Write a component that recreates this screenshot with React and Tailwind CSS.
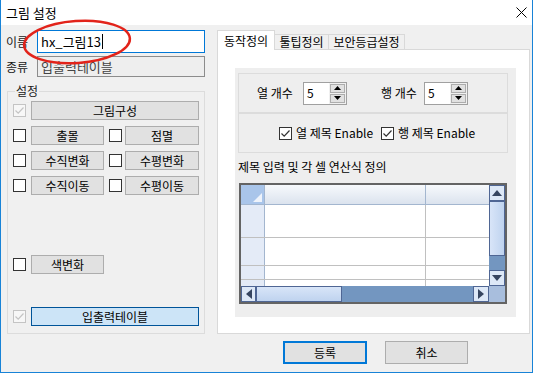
import React from 'react';

function Check({ checked, disabled }) {
  return (
    <span
      className={`flex h-[13px] w-[13px] shrink-0 items-center justify-center border ${
        disabled ? 'border-[#c4c4c4] bg-[#f7f7f7]' : 'border-[#333333] bg-white'
      }`}
    >
      {checked && (
        <svg width="11" height="11" viewBox="0 0 11 11">
          <path d="M1.5 5.5 L4.2 8.2 L9.5 2.5" fill="none" stroke={disabled ? '#c4c4c4' : '#333333'} strokeWidth="1.2" />
        </svg>
      )}
    </span>
  );
}

function Btn({ label, className }) {
  return (
    <div className={`flex h-[19px] items-center justify-center border ${className}`}>{label}</div>
  );
}

function Spin() {
  return (
    <div className="flex h-[23px] w-[44px] border border-[#a0a0a0] bg-white">
      <div className="flex flex-1 items-center pl-[3px]">5</div>
      <div className="flex w-[17px] flex-col gap-[1px] bg-[#f0f0f0] p-[1px]">
        <div className="flex flex-1 items-center justify-center border border-[#adadad] bg-[#e1e1e1]">
          <svg width="7" height="4" viewBox="0 0 7 4"><path d="M0 4 L3.5 0 L7 4 Z" fill="#000" /></svg>
        </div>
        <div className="flex flex-1 items-center justify-center border border-[#adadad] bg-[#e1e1e1]">
          <svg width="7" height="4" viewBox="0 0 7 4"><path d="M0 0 L3.5 4 L7 0 Z" fill="#000" /></svg>
        </div>
      </div>
    </div>
  );
}

function ScrollBtn({ dir }) {
  const paths = {
    left: 'M6 0 L0 5 L6 10 Z',
    right: 'M0 0 L6 5 L0 10 Z',
    up: 'M0 6 L5 0 L10 6 Z',
    down: 'M0 0 L5 6 L10 0 Z',
  };
  const vert = dir === 'up' || dir === 'down';
  return (
    <div className="flex h-full w-full items-center justify-center border border-[#4f6694] bg-[#dde8f7]">
      <svg width={vert ? 10 : 6} height={vert ? 6 : 10} viewBox={vert ? '0 0 10 6' : '0 0 6 10'}>
        <path d={paths[dir]} fill="#364560" />
      </svg>
    </div>
  );
}

function Grid() {
  return (
    <div className="ml-[1px] flex h-[121px] w-[268px] flex-col border-2 border-[#646464] bg-white">
      <div className="flex min-h-0 flex-1">
        <div className="flex min-w-0 flex-1 flex-col overflow-hidden">
          <div className="flex h-[20px] shrink-0 border-b border-[#a3b6cf]">
            <div className="flex w-[24px] items-end justify-end border-r border-[#a3b6cf] bg-[#a9c5ea] p-[2px]">
              <svg width="9" height="9" viewBox="0 0 9 9"><path d="M9 0 L9 9 L0 9 Z" fill="#eef3fb" /></svg>
            </div>
            <div className="w-[161px] border-r border-[#a3b6cf] bg-linear-to-b from-[#f7f9fc] to-[#dbe3ee]" />
            <div className="flex-1 bg-linear-to-b from-[#f7f9fc] to-[#dbe3ee]" />
          </div>
          <div className="flex h-[33px] shrink-0 border-b border-[#c0c0c0]">
            <div className="w-[24px] border-r border-[#a3b6cf] bg-[#e4ebf7]" />
            <div className="w-[161px] border-r border-[#c0c0c0]" />
          </div>
          <div className="flex h-[28px] shrink-0 border-b border-[#c0c0c0]">
            <div className="w-[24px] border-r border-[#a3b6cf] bg-[#e4ebf7]" />
            <div className="w-[161px] border-r border-[#c0c0c0]" />
          </div>
          <div className="flex h-[14px] shrink-0 border-b border-[#c0c0c0]">
            <div className="w-[24px] border-r border-[#a3b6cf] bg-[#e4ebf7]" />
            <div className="w-[161px] border-r border-[#c0c0c0]" />
          </div>
          <div className="flex flex-1">
            <div className="w-[24px] border-r border-[#a3b6cf] bg-[#e4ebf7]" />
            <div className="w-[161px] border-r border-[#c0c0c0]" />
          </div>
        </div>
        <div className="flex w-[16px] flex-col bg-[#7396c0]">
          <div className="h-[16px]"><ScrollBtn dir="up" /></div>
          <div className="h-[55px] border border-[#4f6694] bg-linear-to-r from-[#d8e5f8] to-[#bfd3ef]" />
          <div className="flex-1" />
          <div className="h-[16px]"><ScrollBtn dir="down" /></div>
        </div>
      </div>
      <div className="flex h-[16px] shrink-0">
        <div className="flex flex-1 bg-[#7396c0]">
          <div className="w-[15px]"><ScrollBtn dir="left" /></div>
          <div className="w-[86px] border border-[#4f6694] bg-linear-to-b from-[#d8e5f8] to-[#bfd3ef]" />
          <div className="flex-1" />
          <div className="w-[16px]"><ScrollBtn dir="right" /></div>
        </div>
        <div className="w-[16px] bg-[#a8bedd]" />
      </div>
    </div>
  );
}

export default function App() {
  return (
    <div className="h-[375px] w-[539px] bg-white font-['Noto_Sans_CJK_KR',sans-serif] text-[12px] leading-[16px] text-black">
      <div className="relative flex h-[373px] w-[533px] flex-col border-x border-b border-[#1883d7]">
        {/* title bar */}
        <div className="flex h-[25px] shrink-0 items-center justify-between bg-white pl-[5px] pr-[4px]">
          <span className="text-[13px]">그림 설정</span>
          <svg width="11" height="11" viewBox="0 0 11 11" className="mr-[1px]">
            <path d="M0.5 0.5 L10.5 10.5 M10.5 0.5 L0.5 10.5" stroke="#000" strokeWidth="1" />
          </svg>
        </div>

        <div className="flex flex-1 flex-col bg-[#f0f0f0]">
          <div className="flex">
            {/* left column */}
            <div className="flex w-[204px] flex-col">
              <div className="mt-[5px] flex h-[23px] items-center">
                <span className="w-[36px] pl-[5px] text-[#1a1a1a]">이름</span>
                <div className="flex h-[23px] w-[168px] items-center border border-[#0078d7] bg-white px-[3px] text-[13px]">
                  hx_그림13
                  <span className="ml-[1px] h-[15px] w-[1px] bg-black" />
                </div>
              </div>
              <div className="mt-[3px] flex h-[21px] items-center">
                <span className="w-[36px] pl-[5px] text-[#1a1a1a]">종류</span>
                <div className="flex h-[21px] w-[168px] items-center border border-[#8c8c8c] bg-[#eeeeee] px-[3px] text-[13px] text-[#444444]">
                  입출력테이블
                </div>
              </div>

              <div className="relative ml-[6px] mt-[14px] h-[243px] w-[198px] border border-[#dcdcdc] pl-[5px] pt-[9px]">
                <span className="absolute left-[7px] top-[-9px] bg-[#f0f0f0] px-[1px] text-[#1a1a1a]">설정</span>
                <div className="flex h-[19px] items-center">
                  <Check checked disabled />
                  <Btn label="그림구성" className="ml-[5px] w-[168px] border-[#adadad] bg-[#e1e1e1]" />
                </div>
                {[
                  ['출몰', '점멸'],
                  ['수직변화', '수평변화'],
                  ['수직이동', '수평이동'],
                ].map(([a, b]) => (
                  <div key={a} className="mt-[6px] flex h-[19px] items-center">
                    <Check />
                    <Btn label={a} className="ml-[5px] w-[73px] border-[#adadad] bg-[#e1e1e1]" />
                    <span className="ml-[5px]"><Check /></span>
                    <Btn label={b} className="ml-[3px] w-[74px] border-[#adadad] bg-[#e1e1e1]" />
                  </div>
                ))}
                <div className="mt-[60px] flex h-[19px] items-center">
                  <Check />
                  <Btn label="색변화" className="ml-[5px] w-[73px] border-[#adadad] bg-[#e1e1e1]" />
                </div>
                <div className="mt-[33px] flex h-[19px] items-center">
                  <Check checked disabled />
                  <Btn label="입출력테이블" className="ml-[5px] w-[168px] border-[#005499] bg-[#cce4f7]" />
                </div>
              </div>
            </div>

            {/* right column */}
            <div className="ml-[12px] mt-[5px] flex flex-col">
              <div className="relative z-10 -mb-px flex h-[20px] items-end">
                <div className="flex h-[20px] w-[58px] items-center justify-center border border-b-0 border-[#d9d9d9] bg-white">
                  동작정의
                </div>
                <div className="flex h-[16px] w-[54px] items-center justify-center border border-l-0 border-[#d9d9d9] bg-[#f0f0f0]">
                  툴팁정의
                </div>
                <div className="flex h-[16px] w-[76px] items-center justify-center border border-l-0 border-[#d9d9d9] bg-[#f0f0f0]">
                  보안등급설정
                </div>
              </div>
              <div className="h-[285px] w-[313px] border border-[#d9d9d9] bg-white pb-[16px] pl-[17px] pr-[13px] pt-[18px]">
                <div className="flex h-full flex-col bg-[#eeeeee] pl-[3px] pr-[8px] pt-[5px]">
                  <div className="flex h-[40px] items-center border border-[#dcdcdc] pl-[18px]">
                    <span className="w-[46px]">열 개수</span>
                    <Spin />
                    <span className="ml-[34px] w-[43px]">행 개수</span>
                    <Spin />
                  </div>
                  <div className="flex h-[40px] items-center border border-[#dcdcdc] pl-[40px]">
                    <div className="flex w-[102px] items-center gap-[4px]">
                      <Check checked />
                      <span>열 제목 Enable</span>
                    </div>
                    <div className="flex items-center gap-[4px]">
                      <Check checked />
                      <span>행 제목 Enable</span>
                    </div>
                  </div>
                  <div className="mt-[6px]">제목 입력 및 각 셀 연산식 정의</div>
                  <div className="mt-[8px]">
                    <Grid />
                  </div>
                </div>
              </div>
            </div>
          </div>

          {/* bottom buttons */}
          <div className="mt-[7px] flex pl-[282px]">
            <div className="flex h-[23px] w-[84px] items-center justify-center border-2 border-[#0078d7] bg-[#e1e1e1]">
              등록
            </div>
            <div className="ml-[18px] flex h-[23px] w-[83px] items-center justify-center border border-[#adadad] bg-[#e1e1e1]">
              취소
            </div>
          </div>
        </div>

        {/* red annotation ellipse */}
        <svg className="pointer-events-none absolute left-[19px] top-[18px]" width="114" height="48" viewBox="0 0 114 48">
          <ellipse cx="57" cy="24" rx="53" ry="21" fill="none" stroke="#e2231a" strokeWidth="2.5" transform="rotate(-4 57 24)" />
        </svg>
      </div>
    </div>
  );
}
